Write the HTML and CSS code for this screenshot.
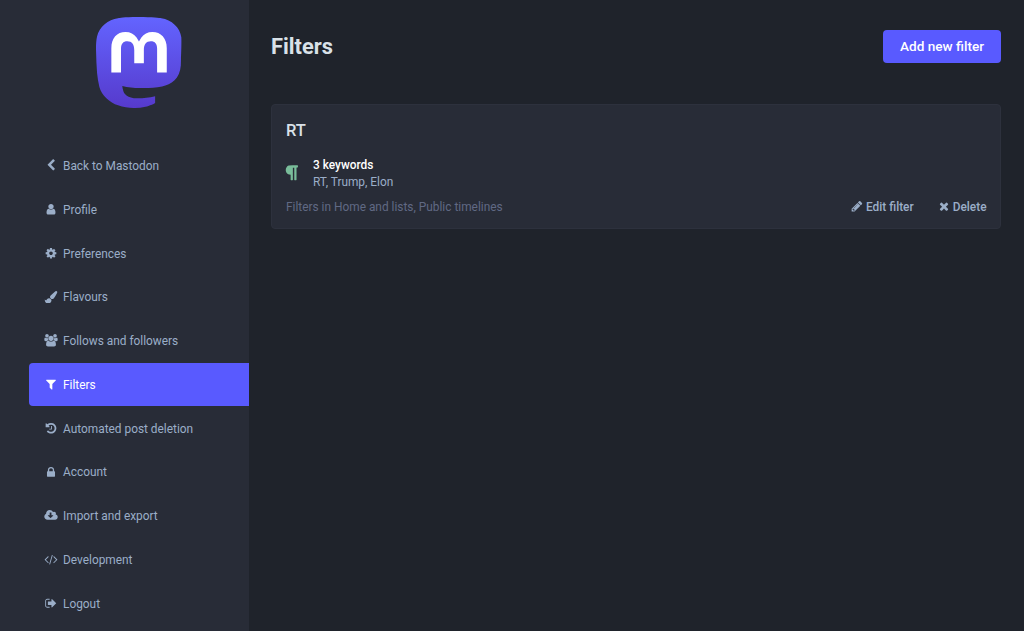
FILE: index.html
```html
<!DOCTYPE html>
<html lang="en">
<head>
<meta charset="utf-8">
<title>Filters</title>
<link rel="stylesheet" href="styles.css">
</head>
<body>
<div class="admin">
  <aside class="sidebar">
    <a class="logo" href="#">
      <svg viewBox="0 0 74 79" preserveAspectRatio="none" role="img" aria-label="Mastodon">
        <defs><linearGradient id="brand" x1="0" y1="0" x2="0" y2="1"><stop stop-color="#6364ff"/><stop offset="1" stop-color="#563acc"/></linearGradient></defs>
        <path fill="url(#brand)" d="M73.84 17.49C72.7 9 65.3 2.31 56.53 1.02C55.05.8 49.44 0 36.46 0H36.36C23.37 0 20.59.8 19.11 1.02C10.58 2.28 2.79 8.29.9 16.88C0 21.11-.1 25.79.07 30.1C.31 36.27.36 42.42.92 48.57C1.3 52.65 1.98 56.7 2.94 60.68C4.73 68.04 12 74.17 19.12 76.67C26.75 79.27 34.95 79.71 42.8 77.92C43.67 77.72 44.52 77.48 45.36 77.22C47.28 76.61 49.51 75.93 51.16 74.74V68.8C46.12 70 40.96 70.6 35.78 70.58C26.86 70.58 24.46 66.35 23.78 64.59C23.22 63.07 22.87 61.48 22.74 59.87C27.69 61.06 32.77 61.66 37.87 61.66C39.1 61.66 40.32 61.66 41.55 61.63C46.68 61.49 52.09 61.22 57.14 60.24C65.09 58.71 72.68 53.9 73.45 41.75C73.48 41.27 73.55 36.73 73.55 36.23C73.56 34.55 74.1 24.26 73.84 17.49Z"/>
        <path fill="#fff" d="M61.25 27.03V48.11H52.89V27.65C52.89 23.34 51.1 21.14 47.44 21.14C43.43 21.14 41.42 23.74 41.42 28.88V40.08H33.11V28.88C33.11 23.74 31.1 21.14 27.08 21.14C23.45 21.14 21.64 23.34 21.64 27.65V48.11H13.28V27.03C13.28 22.72 14.38 19.29 16.58 16.75C18.84 14.23 21.8 12.93 25.49 12.93C29.75 12.93 32.97 14.57 35.11 17.84L37.18 21.32L39.26 17.84C41.4 14.57 44.62 12.93 48.88 12.93C52.56 12.93 55.52 14.23 57.79 16.75C59.99 19.29 61.25 22.71 61.25 27.03Z"/>
      </svg>
    </a>
    <nav class="menu">
      <a class="item" href="#"><svg class="icon" viewBox="0 0 1792 1792"><path d="M1427 301l-531 531 531 531q19 19 19 45t-19 45l-166 166q-19 19-45 19t-45-19l-742-742q-19-19-19-45t19-45l742-742q19-19 45-19t45 19l166 166q19 19 19 45t-19 45z"/></svg>Back to Mastodon</a>
      <a class="item" href="#"><svg class="icon" viewBox="0 0 1792 1792"><path d="M1536 1399q0 109-62.5 187t-150.5 78h-854q-88 0-150.5-78t-62.5-187q0-85 8.5-160.5t31.5-152 58.5-131 94-89 134.5-34.5q131 128 313 128t313-128q76 0 134.5 34.5t94 89 58.5 131 31.5 152 8.5 160.5zm-256-887q0 159-112.5 271.5t-271.5 112.5-271.5-112.5-112.5-271.5 112.5-271.5 271.5-112.5 271.5 112.5 112.5 271.5z"/></svg>Profile</a>
      <a class="item" href="#"><svg class="icon" viewBox="0 0 1792 1792"><path d="M1152 896q0-106-75-181t-181-75-181 75-75 181 75 181 181 75 181-75 75-181zm512-109v222q0 12-8 23t-20 13l-185 28q-19 54-39 91 35 50 107 138 10 12 10 25t-9 23q-27 37-99 108t-94 71q-12 0-26-9l-138-108q-44 23-91 38-16 136-29 186-7 28-36 28h-222q-14 0-24.5-8.5t-11.5-21.5l-28-184q-49-16-90-37l-141 107q-10 9-25 9-14 0-25-11-126-114-165-168-7-10-7-23 0-12 8-23 15-21 51-66.5t54-70.5q-27-50-41-99l-183-27q-13-2-21-12.5t-8-23.5v-222q0-12 8-23t19-13l186-28q14-46 39-92-40-57-107-138-10-12-10-24 0-10 9-23 26-36 98.5-107.5t94.5-71.5q13 0 26 10l138 107q44-23 91-38 16-136 29-186 7-28 36-28h222q14 0 24.5 8.5t11.5 21.5l28 184q49 16 90 37l142-107q9-9 24-9 13 0 25 10 129 119 165 170 7 8 7 22 0 12-8 23-15 21-51 66.5t-54 70.5q26 50 41 98l183 28q13 2 21 12.5t8 23.5z"/></svg>Preferences</a>
      <a class="item" href="#"><svg class="icon" viewBox="0 0 1792 1792"><path d="M1615 0q70 0 122 46.5t52 116.5q0 63-45 151-332 629-465 752-97 91-218 91-126 0-216.5-92.5t-90.5-219.5q0-128 92-212l638-579q59-54 131-54zm-909 1034q39 76 106.5 130t150.5 76l1 71q4 213-129.5 347t-348.5 134q-123 0-218-46.5t-152.5-127.5-86.5-183-29-220q7 5 41 30t62 44.5 59 36.5 46 17q41 0 55-37 25-66 57.5-112.5t69.5-76 88-47.5 103-25.5 125-10.5z"/></svg>Flavours</a>
      <a class="item" href="#"><svg class="icon" viewBox="0 0 1920 1792"><path d="M593 896q-162 5-265 128h-134q-82 0-138-40.5t-56-118.5q0-353 124-353 6 0 43.5 21t97.5 42.5 119 21.5q67 0 133-23-5 37-5 66 0 139 81 256zm1071 637q0 120-73 189.5t-194 69.5h-874q-121 0-194-69.5t-73-189.5q0-53 3.5-103.5t14-109 26.5-108.5 43-97.5 62-81 85.5-53.5 111.5-20q10 0 43 21.5t73 48 107 48 135 21.5 135-21.5 107-48 73-48 43-21.5q61 0 111.5 20t85.5 53.5 62 81 43 97.5 26.5 108.5 14 109 3.5 103.5zm-1024-1277q0 106-75 181t-181 75-181-75-75-181 75-181 181-75 181 75 75 181zm704 384q0 159-112.5 271.5t-271.5 112.5-271.5-112.5-112.5-271.5 112.5-271.5 271.5-112.5 271.5 112.5 112.5 271.5zm576 225q0 78-56 118.5t-138 40.5h-134q-103-123-265-128 81-117 81-256 0-29-5-66 66 23 133 23 59 0 119-21.5t97.5-42.5 43.5-21q124 0 124 353zm-128-609q0 106-75 181t-181 75-181-75-75-181 75-181 181-75 181 75 75 181z"/></svg>Follows and followers</a>
      <a class="item selected" href="#"><svg class="icon" viewBox="0 0 1792 1792"><path d="M1595 295q17 41-14 70l-493 493v742q0 42-39 59-13 5-25 5-27 0-45-19l-256-256q-19-19-19-45v-486l-493-493q-31-29-14-70 17-39 59-39h1280q42 0 59 39z"/></svg>Filters</a>
      <a class="item" href="#"><svg class="icon" viewBox="0 0 1792 1792"><path d="M1664 896q0 156-61 298t-164 245-245 164-298 61q-172 0-327-72.5t-264-204.5q-7-10-6.5-22.5t8.5-20.5l137-138q10-9 25-9 16 2 23 12 73 95 179 147t225 52q104 0 198.5-40.5t163.5-109.5 109.5-163.5 40.5-198.5-40.5-198.5-109.5-163.5-163.5-109.5-198.5-40.5q-98 0-188 35.5t-160 101.5l137 138q31 30 14 69-17 40-59 40h-448q-26 0-45-19t-19-45v-448q0-42 40-59 39-17 69 14l130 129q107-101 244.5-156.5t284.5-55.5q156 0 298 61t245 164 164 245 61 298zm-640-288v448q0 14-9 23t-23 9h-320q-14 0-23-9t-9-23v-64q0-14 9-23t23-9h224v-352q0-14 9-23t23-9h64q14 0 23 9t9 23z"/></svg>Automated post deletion</a>
      <a class="item" href="#"><svg class="icon" viewBox="0 0 1792 1792"><path d="M640 768h512v-192q0-106-75-181t-181-75-181 75-75 181v192zm832 96v576q0 40-28 68t-68 28h-960q-40 0-68-28t-28-68v-576q0-40 28-68t68-28h32v-192q0-184 132-316t316-132 316 132 132 316v192h32q40 0 68 28t28 68z"/></svg>Account</a>
      <a class="item" href="#"><svg class="icon" viewBox="0 0 1920 1792"><path d="M1280 928q0-14-9-23t-23-9h-224v-352q0-13-9.5-22.5t-22.5-9.5h-192q-13 0-22.5 9.5t-9.5 22.5v352h-224q-13 0-22.5 9.5t-9.5 22.5q0 14 9 23l352 352q9 9 23 9t23-9l351-351q10-12 10-24zm640 224q0 159-112.5 271.5t-271.5 112.5h-1088q-185 0-316.5-131.5t-131.5-316.5q0-130 70-240t188-165q-2-30-2-43 0-212 150-362t362-150q156 0 285.5 87t188.5 231q71-62 166-62 106 0 181 75t75 181q0 76-41 138 130 31 213.5 135.5t83.5 238.5z"/></svg>Import and export</a>
      <a class="item" href="#"><svg class="icon" viewBox="0 0 1920 1792"><path d="M617 1399l-50 50q-10 10-23 10t-23-10l-466-466q-10-10-10-23t10-23l466-466q10-10 23-10t23 10l50 50q10 10 10 23t-10 23l-393 393 393 393q10 10 10 23t-10 23zm591-1067l-373 1291q-4 13-15.5 19.5t-23.5 2.5l-62-17q-13-4-19.5-15.5t-2.5-24.5l373-1291q4-13 15.5-19.5t23.5-2.5l62 17q13 4 19.5 15.5t2.5 24.5zm657 651l-466 466q-10 10-23 10t-23-10l-50-50q-10-10-10-23t10-23l393-393-393-393q-10-10-10-23t10-23l50-50q10-10 23-10t23 10l466 466q10 10 10 23t-10 23z"/></svg>Development</a>
      <a class="item" href="#"><svg class="icon" viewBox="0 0 1792 1792"><path d="M704 1440q0 4 1 20t.5 26.5-3 23.5-10 19.5-20.5 6.5h-320q-119 0-203.5-84.5t-84.5-203.5v-704q0-119 84.5-203.5t203.5-84.5h320q13 0 22.5 9.5t9.5 22.5q0 4 1 20t.5 26.5-3 23.5-10 19.5-20.5 6.5h-320q-66 0-113 47t-47 113v704q0 66 47 113t113 47h312l11.5 1 11.5 3 8 5.5 7 9 2 13.5zm928-544q0 26-19 45l-544 544q-19 19-45 19t-45-19-19-45v-288h-448q-26 0-45-19t-19-45v-384q0-26 19-45t45-19h448v-288q0-26 19-45t45-19 45 19l544 544q19 19 19 45z"/></svg>Logout</a>
    </nav>
  </aside>
  <main class="content">
    <header class="heading">
      <h1>Filters</h1>
      <a class="button" href="#">Add new filter</a>
    </header>
    <section class="card">
      <h2>RT</h2>
      <div class="keywords">
        <svg class="paragraph" viewBox="0 0 1792 1792"><path d="M1534 189v73q0 29-18.5 61t-42.5 32q-50 0-54 1-26 6-32 31-3 11-3 64v1152q0 25-18 43t-43 18h-108q-25 0-43-18t-18-43v-1218h-143v1218q0 25-17.5 43t-43.5 18h-108q-26 0-43.5-18t-17.5-43v-496q-147-12-245-59-126-58-192-179-64-117-64-259 0-166 88-286 88-118 209-159 111-37 417-37h479q25 0 43 18t18 43z"/></svg>
        <div>
          <div class="count">3 keywords</div>
          <div class="list">RT, Trump, Elon</div>
        </div>
      </div>
      <footer class="actions">
        <span class="contexts">Filters in Home and lists, Public timelines</span>
        <a class="action" href="#"><svg class="icon" viewBox="0 0 1792 1792"><path d="M491 1536l91-91-235-235-91 91v107h128v128h107zm523-928q0-22-22-22-10 0-17 7l-542 542q-7 7-7 17 0 22 22 22 10 0 17-7l542-542q7-7 7-17zm-54-192l416 416-832 832h-416v-416zm683 96q0 53-37 90l-166 166-416-416 166-165q36-38 90-38 53 0 91 38l235 234q37 39 37 91z"/></svg>Edit filter</a>
        <a class="action" href="#"><svg class="icon" viewBox="0 0 1792 1792"><path d="M1490 1322q0 40-28 68l-136 136q-28 28-68 28t-68-28l-294-294-294 294q-28 28-68 28t-68-28l-136-136q-28-28-28-68t28-68l294-294-294-294q-28-28-28-68t28-68l136-136q28-28 68-28t68 28l294 294 294-294q28-28 68-28t68 28l136 136q28 28 28 68t-28 68l-294 294 294 294q28 28 28 68z"/></svg>Delete</a>
      </footer>
    </section>
  </main>
</div>
</body>
</html>
```

FILE: styles.css
```css
* { box-sizing: border-box; }
body {
  margin: 0;
  background: #1f232b;
  color: #9baec8;
  font: 11.88px/17px Roboto, "Liberation Sans", sans-serif;
}
a { color: inherit; text-decoration: none; }
svg { display: block; fill: currentColor; flex: none; }
.admin { display: flex; height: 631px; overflow: hidden; }
.sidebar {
  width: 249px;
  flex: none;
  padding: 17px 0 0 29px;
  background: #282c37;
}
.logo { display: block; width: 86px; margin-left: 67.4px; }
.logo svg { width: 85.5px; height: 91px; }
.menu { padding-top: 36.2px; }
.item {
  display: flex;
  align-items: center;
  gap: 5px;
  height: 43.75px;
  padding: 1px 0 0 15px;
  border-radius: 4px 0 0 4px;
}
.icon { width: 14px; height: 12.5px; margin-bottom: 2px; }
.selected { height: 43px; margin-bottom: .75px; padding-top: 1.6px; background: #595aff; color: #fff; }
.content { flex: 1; padding: 30px 23px 0 22px; }
.heading { display: flex; justify-content: space-between; align-items: center; }
h1, h2 { margin: 0; color: #d9e1e8; font-weight: 700; }
h1 { font-size: 21.8px; line-height: 33px; }
.button {
  width: 118px;
  border-radius: 4px;
  background: #595aff;
  color: #fff;
  font-size: 13.6px;
  font-weight: 500;
  line-height: 33px;
  text-align: center;
}
.card {
  margin-top: 41px;
  height: 125px;
  padding: 14px 13.5px 0 14px;
  border: 1px solid #2d313d;
  border-radius: 4px;
  background: #282c37;
}
h2 { font-size: 16.5px; line-height: 24px; font-weight: 500; }
.keywords { display: flex; align-items: center; gap: 13px; margin-top: 14px; }
.paragraph { width: 17.5px; height: 17.5px; margin: 0 0 2px -3.5px; color: #79bd9a; }
.count { color: #fff; font-weight: 500; }
.actions { display: flex; align-items: center; margin-top: 8px; }
.contexts { flex: 1; color: #606984; }
.action { display: flex; align-items: center; gap: 2px; margin-left: 23px; font-weight: 500; }
```
